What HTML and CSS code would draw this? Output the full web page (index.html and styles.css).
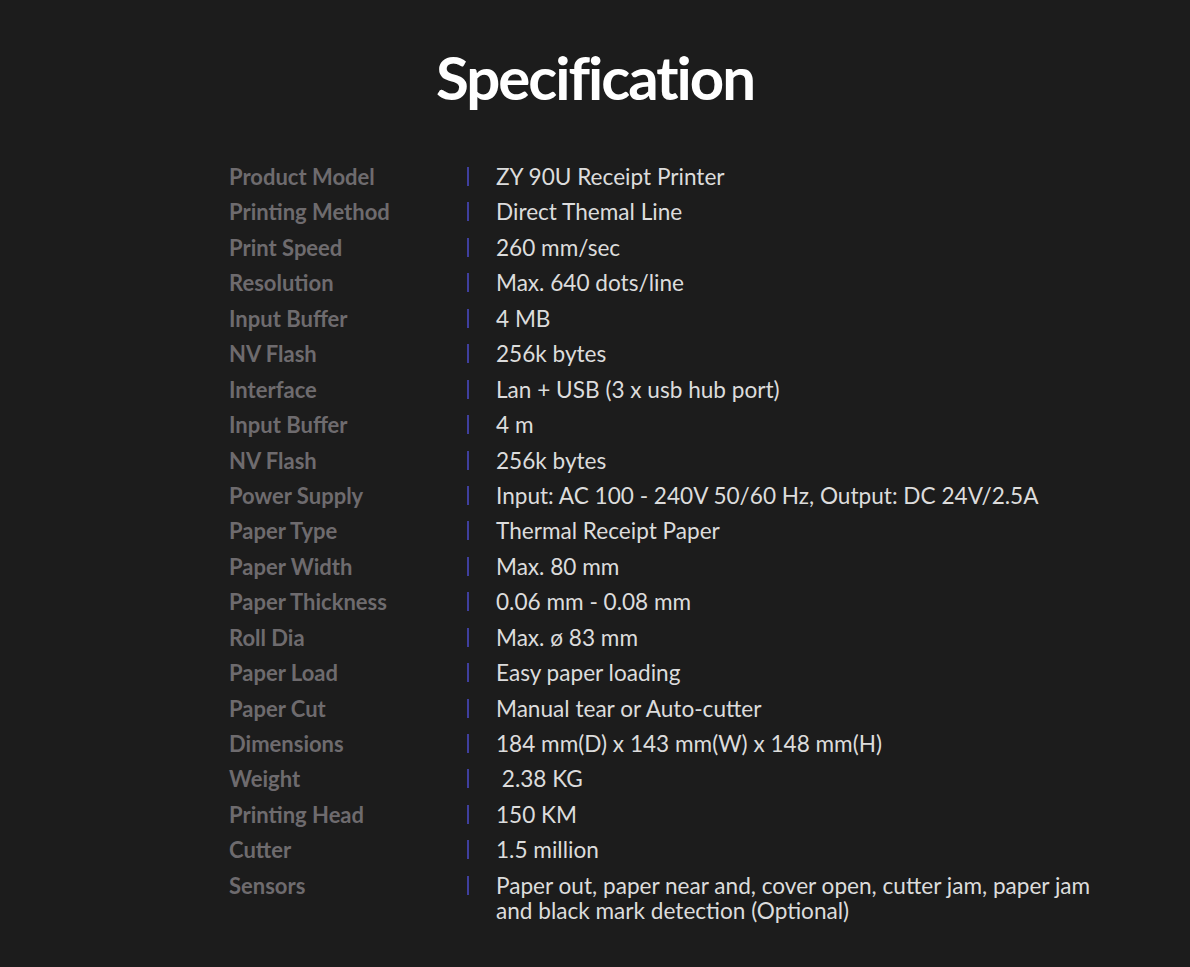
FILE: index.html
```html
<!DOCTYPE html>
<html lang="en">
<head>
<meta charset="utf-8">
<title>Specification</title>
<link rel="stylesheet" href="styles.css">
</head>
<body>
<section class="spec">
  <h1 class="spec-title">Specification</h1>
  <dl class="spec-list">
    <div class="spec-row"><dt>Product Model</dt><dd>ZY 90U Receipt Printer</dd></div>
    <div class="spec-row"><dt>Printing Method</dt><dd>Direct Themal Line</dd></div>
    <div class="spec-row"><dt>Print Speed</dt><dd>260 mm/sec</dd></div>
    <div class="spec-row"><dt>Resolution</dt><dd>Max. 640 dots/line</dd></div>
    <div class="spec-row"><dt>Input Buffer</dt><dd>4 MB</dd></div>
    <div class="spec-row"><dt>NV Flash</dt><dd>256k bytes</dd></div>
    <div class="spec-row"><dt>Interface</dt><dd>Lan + USB (3 x usb hub port)</dd></div>
    <div class="spec-row"><dt>Input Buffer</dt><dd>4 m</dd></div>
    <div class="spec-row"><dt>NV Flash</dt><dd>256k bytes</dd></div>
    <div class="spec-row"><dt>Power Supply</dt><dd>Input: AC 100 - 240V 50/60 Hz, Output: DC 24V/2.5A</dd></div>
    <div class="spec-row"><dt>Paper Type</dt><dd>Thermal Receipt Paper</dd></div>
    <div class="spec-row"><dt>Paper Width</dt><dd>Max. 80 mm</dd></div>
    <div class="spec-row"><dt>Paper Thickness</dt><dd>0.06 mm - 0.08 mm</dd></div>
    <div class="spec-row"><dt>Roll Dia</dt><dd>Max. ø 83 mm</dd></div>
    <div class="spec-row"><dt>Paper Load</dt><dd>Easy paper loading</dd></div>
    <div class="spec-row"><dt>Paper Cut</dt><dd>Manual tear or Auto-cutter</dd></div>
    <div class="spec-row"><dt>Dimensions</dt><dd>184 mm(D) x 143 mm(W) x 148 mm(H)</dd></div>
    <div class="spec-row"><dt>Weight</dt><dd>&nbsp;2.38 KG</dd></div>
    <div class="spec-row"><dt>Printing Head</dt><dd>150 KM</dd></div>
    <div class="spec-row"><dt>Cutter</dt><dd>1.5 million</dd></div>
    <div class="spec-row"><dt>Sensors</dt><dd>Paper out, paper near and, cover open, cutter jam, paper jam and black mark detection (Optional)</dd></div>
  </dl>
</section>
</body>
</html>
```

FILE: styles.css
```css
html, body {
  margin: 0;
  padding: 0;
  background: #1c1c1c;
}

body {
  font-family: "Lato", "Noto Sans", sans-serif;
  color: #dcdcdc;
  min-height: 967px;
}

.spec {
  padding-top: 41px;
}

.spec-title {
  margin: 0;
  text-align: center;
  font-size: 60px;
  line-height: 72px;
  font-weight: 700;
  color: #ffffff;
  letter-spacing: -2px;
}

.spec-list {
  margin: 51px 0 0 229px;
  width: 896px;
  display: flex;
  flex-direction: column;
  gap: 10.45px;
}

.spec-row {
  display: grid;
  grid-template-columns: 238px 1fr;
  font-size: 22px;
  line-height: 25px;
}

.spec-row dt {
  font-weight: 700;
  color: #6e6b6e;
}

.spec-row dd {
  margin: 0;
  position: relative;
  padding-left: 29px;
  font-size: 22.6px;
  color: #dcdcdc;
}

.spec-row dd::before {
  content: "";
  position: absolute;
  left: 0;
  top: 3px;
  width: 2px;
  height: 19px;
  background: #3f3f9e;
}
```
